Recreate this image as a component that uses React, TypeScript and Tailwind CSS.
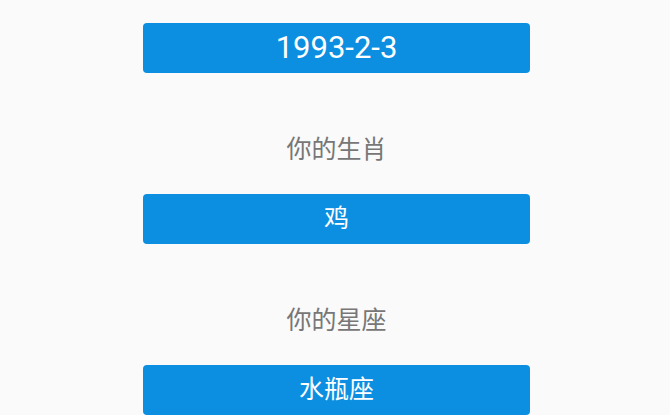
import type React from "react";

const font = { fontFamily: 'Roboto, "Noto Sans CJK SC", sans-serif' };

const Block: React.FC<{ label: string; value: string }> = ({ label, value }) => (
  <>
    <div className="mt-[62px] mb-[29px] h-[30px] text-center text-[25px] leading-[30px] text-[#777777]">
      {label}
    </div>
    <button className="flex h-[50px] w-full items-center justify-center rounded-[4px] bg-[#0c8fe0] text-[25px] text-white">
      {value}
    </button>
  </>
);

const App: React.FC = () => {
  return (
    <div className="min-h-[415px] w-full bg-[#fafafa] pt-[23px] pl-[143px]" style={font}>
      <div className="flex w-[387px] flex-col">
        <button className="flex h-[50px] w-full items-center justify-center rounded-[4px] bg-[#0c8fe0] text-[31px] text-white">
          1993-2-3
        </button>
        <Block label="你的生肖" value="鸡" />
        <Block label="你的星座" value="水瓶座" />
      </div>
    </div>
  );
};

export default App;
